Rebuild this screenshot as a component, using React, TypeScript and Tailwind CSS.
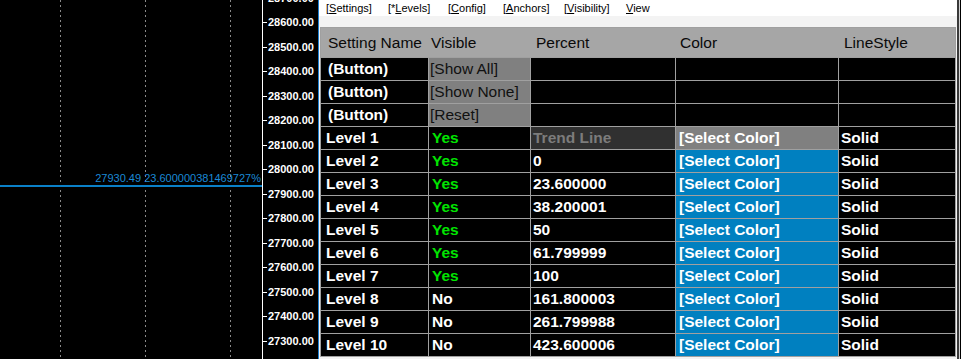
import React from "react";

const font = { fontFamily: '"Liberation Sans", Arial, sans-serif' };

const priceLabels = [
  "28700.00", "28600.00", "28500.00", "28400.00", "28300.00", "28200.00", "28100.00",
  "28000.00", "27900.00", "27800.00", "27700.00", "27600.00", "27500.00", "27400.00", "27300.00",
];

const menuItems = [
  { key: "S", before: "[", rest: "ettings]", w: "w-[62px]" },
  { key: "L", before: "[*", rest: "evels]", w: "w-[60px]" },
  { key: "C", before: "[", rest: "onfig]", w: "w-[55px]" },
  { key: "A", before: "[", rest: "nchors]", w: "w-[61px]" },
  { key: "V", before: "[", rest: "isibility]", w: "w-[62px]" },
  { key: "V", before: "", rest: "iew", w: "w-[40px]" },
];

const buttons = ["[Show All]", "[Show None]", "[Reset]"];

const levels = [
  { name: "Level 1", visible: true, percent: "Trend Line" },
  { name: "Level 2", visible: true, percent: "0" },
  { name: "Level 3", visible: true, percent: "23.600000" },
  { name: "Level 4", visible: true, percent: "38.200001" },
  { name: "Level 5", visible: true, percent: "50" },
  { name: "Level 6", visible: true, percent: "61.799999" },
  { name: "Level 7", visible: true, percent: "100" },
  { name: "Level 8", visible: false, percent: "161.800003" },
  { name: "Level 9", visible: false, percent: "261.799988" },
  { name: "Level 10", visible: false, percent: "423.600006" },
];

function Chart() {
  return (
    <div className="relative w-[318px] h-full bg-black overflow-hidden shrink-0">
      <svg width="318" height="359" className="absolute left-0 top-0">
        {[60.5, 145.5, 230.5].map((x) => (
          <line key={x} x1={x} y1={0} x2={x} y2={359} stroke="#8a8a8a" strokeWidth="1" strokeDasharray="2 3" />
        ))}
        <line x1={262.5} y1={0} x2={262.5} y2={359} stroke="#ffffff" strokeWidth="1" />
        {priceLabels.map((_, i) => {
          const y = Math.round(-2.5 + i * 24.5) + 0.5;
          return <line key={i} x1={263} y1={y} x2={267} y2={y} stroke="#ffffff" strokeWidth="1" />;
        })}
        <rect x={0} y={185} width={262} height={2} fill="#0a80c8" />
      </svg>
      {priceLabels.map((p, i) => (
        <div
          key={p}
          className="absolute left-[268px] text-[11px] leading-[12px] font-bold text-white"
          style={{ top: Math.round(-2.5 + i * 24.5) - 6 }}
        >
          {p}
        </div>
      ))}
      <div className="absolute right-[57px] top-[172px] text-[11px] leading-[12px] text-[#1a8ad6]">
        27930.49 23.600000381469727%
      </div>
    </div>
  );
}

function Cell({ className = "", children }: { className?: string; children?: React.ReactNode }) {
  return <div className={`h-[22px] flex items-center whitespace-nowrap overflow-hidden ${className}`}>{children}</div>;
}

export default function App() {
  return (
    <div className="w-[961px] h-[359px] flex bg-black overflow-hidden text-[15.5px]" style={font}>
      <Chart />
      <div className="w-[639px] h-full shrink-0 flex flex-col bg-[#f3f3f3] border-l border-[#1e7fd0] overflow-hidden">
        <div className="h-[16px] shrink-0 bg-white flex items-center pl-[7px] text-[11px] leading-none text-black">
          {menuItems.map((m, i) => (
            <span key={i} className={m.w}>
              {m.before}
              <span className="underline">{m.key}</span>
              {m.rest}
            </span>
          ))}
        </div>
        <div className="h-[11px] shrink-0" />
        <div className="pl-px shrink-0">
          <div className="w-[636px] grid grid-cols-[107px_101px_144px_162px_116px] gap-px bg-[#a0a0a0] border border-[#a0a0a0]">
            <div className="col-span-5 h-[29px] bg-[#a6a6a6] grid grid-cols-[108px_102px_145px_163px_116px] items-center text-[#0a0a0a]">
              <div className="pl-[7px]">Setting Name</div>
              <div className="pl-[2px]">Visible</div>
              <div className="pl-[5px]">Percent</div>
              <div className="pl-[4px]">Color</div>
              <div className="pl-[5px]">LineStyle</div>
            </div>
            {buttons.map((b) => (
              <React.Fragment key={b}>
                <Cell className="bg-black text-white font-bold pl-[7px]">(Button)</Cell>
                <Cell className="bg-[#808080] text-[#111] pl-[1px]">{b}</Cell>
                <Cell className="bg-black" />
                <Cell className="bg-black" />
                <Cell className="bg-black" />
              </React.Fragment>
            ))}
            {levels.map((l, i) => (
              <React.Fragment key={l.name}>
                <Cell className="bg-black text-white font-bold pl-[5px]">{l.name}</Cell>
                <Cell className={`bg-black font-bold pl-[3px] ${l.visible ? "text-[#00e400]" : "text-white"}`}>
                  {l.visible ? "Yes" : "No"}
                </Cell>
                <Cell className={`font-bold pl-[2px] ${i === 0 ? "bg-[#303030] text-[#7c7c7c]" : "bg-black text-white"}`}>
                  {l.percent}
                </Cell>
                <Cell className={`text-white font-bold pl-[3px] ${i === 0 ? "bg-[#808080]" : "bg-[#0080c0]"}`}>
                  [Select Color]
                </Cell>
                <Cell className="bg-black text-white font-bold pl-[2px]">Solid</Cell>
              </React.Fragment>
            ))}
          </div>
        </div>
      </div>
      <div className="w-[2px] h-full shrink-0 bg-[#3a3a3a]" />
      <div className="w-[1px] h-full shrink-0 bg-[#d4d4d4]" />
    </div>
  );
}
